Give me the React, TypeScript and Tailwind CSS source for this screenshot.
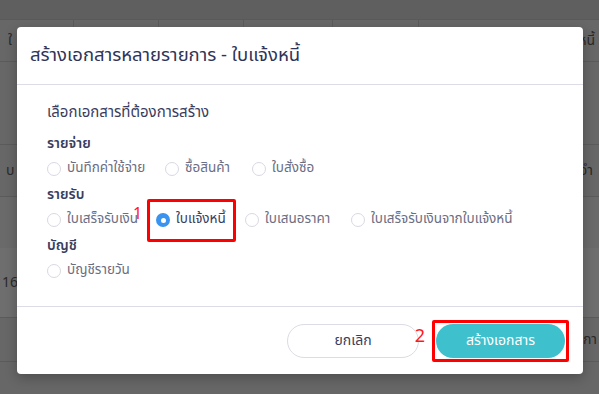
import React from "react";

const font = { fontFamily: '"Noto Sans Thai", "Noto Sans", "Liberation Sans", sans-serif' };

const groups = [
  { title: "รายจ่าย", items: [
    { label: "บันทึกค่าใช้จ่าย", w: "w-[118px]" },
    { label: "ซื้อสินค้า", w: "w-[87px]" },
    { label: "ใบสั่งซื้อ", w: "" },
  ] },
  { title: "รายรับ", items: [
    { label: "ใบเสร็จรับเงิน", w: "w-[109px]", mark: "1" },
    { label: "ใบแจ้งหนี้", w: "w-[89px]", checked: true },
    { label: "ใบเสนอราคา", w: "w-[106px]" },
    { label: "ใบเสร็จรับเงินจากใบแจ้งหนี้", w: "" },
  ] },
  { title: "บัญชี", items: [{ label: "บัญชีรายวัน", w: "" }] },
];

function Radio({ checked }: { checked?: boolean }) {
  return checked ? (
    <span className="w-[14px] h-[14px] rounded-full bg-[#3b93f0] flex items-center justify-center shrink-0">
      <span className="w-[5px] h-[5px] rounded-full bg-white" />
    </span>
  ) : (
    <span className="w-[14px] h-[14px] rounded-full border border-[#d9d8e4] bg-white shrink-0" />
  );
}

export default function App() {
  return (
    <div className="relative w-[599px] h-[394px] overflow-hidden bg-[#676767]" style={font}>
      {/* background table (dimmed) */}
      <div className="flex flex-col text-[14px] text-[#2a2a2a]">
        <div className="h-[20px] bg-[#5f5f5f] border-b border-[#5a5a5a]" />
        <div className="h-[42px] flex border-b border-[#5b5b5b]">
          <div className="w-[74px] border-r border-[#5b5b5b] pl-[8px] pt-[10px]">ใ</div>
          <div className="w-[85px] border-r border-[#5b5b5b]" />
          <div className="w-[85px] border-r border-[#5b5b5b]" />
          <div className="w-[89px] border-r border-[#5b5b5b]" />
          <div className="w-[86px] border-r border-[#5b5b5b]" />
          <div className="flex-1 flex justify-end pr-[4px] pt-[10px]">หนี้</div>
        </div>
        <div className="h-[83px] border-b border-[#5b5b5b]" />
        <div className="h-[52px] flex justify-between items-center border-b border-[#5b5b5b] px-[6px]">
          <span>บ</span>
          <span>จำ</span>
        </div>
        <div className="h-[51px] bg-[#6a6a6a]" />
        <div className="h-[70px] bg-[#6e6e6e] border-b border-[#5b5b5b] pl-[2px] pt-[24px]">16</div>
        <div className="h-[44px] flex justify-end items-center border-b border-[#5b5b5b] pr-[2px]">บกา</div>
      </div>

      {/* modal */}
      <div className="absolute left-[17px] top-[27px] w-[566px] h-[347px] bg-white rounded-[4px] shadow-[0_4px_12px_rgba(0,0,0,0.25)] flex flex-col">
        <div className="h-[58px] border-b border-[#dcdbe6] flex items-center px-[13px]">
          <h2 className="text-[18.5px] text-[#2f3457] leading-none">สร้างเอกสารหลายรายการ - ใบแจ้งหนี้</h2>
        </div>
        <div className="flex-1 px-[30px] pt-[17px] border-b border-[#dcdbe6]">
          <div className="text-[15px] text-[#3a3d5c] leading-[22px] mb-[9px]">เลือกเอกสารที่ต้องการสร้าง</div>
          {groups.map((g) => (
            <div key={g.title} className="mb-[1px]">
              <div className="text-[14px] font-semibold text-[#3a3d5c] leading-[22px]">{g.title}</div>
              <div className="flex items-center h-[28px]">
                {g.items.map((it: any) => (
                  <div key={it.label} className={`relative flex items-center gap-[6px] ${it.w}`}>
                    {it.checked && (
                      <span className="absolute left-[-9px] top-[-14px] w-[89px] h-[43px] border-[3px] border-[#ff0000] rounded-[2px]" />
                    )}
                    <Radio checked={it.checked} />
                    <span className={`text-[13.5px] leading-none ${it.checked ? "text-[#3a3d5c]" : "text-[#6b6d82]"}`}>{it.label}</span>
                    {it.mark && (
                      <span className="absolute left-[86px] top-[-11px] text-[16px] text-[#ff1a1a]">{it.mark}</span>
                    )}
                  </div>
                ))}
              </div>
            </div>
          ))}
        </div>
        <div className="h-[67px] flex items-center justify-end gap-[17px] pr-[18px]">
          <div className="relative">
            <button className="w-[132px] h-[34px] rounded-full border border-[#dcdbe6] bg-white text-[14px] text-[#3a3d5c]">ยกเลิก</button>
            <span className="absolute right-[-6px] top-[4px] text-[18px] text-[#ff1a1a] leading-none">2</span>
          </div>
          <div className="relative p-[1px] border-[3px] border-[#ff0000] rounded-[2px] -m-[4px]">
            <button className="w-[129px] h-[34px] rounded-full bg-[#3fc0cd] text-[14px] text-white">สร้างเอกสาร</button>
          </div>
        </div>
      </div>
    </div>
  );
}
